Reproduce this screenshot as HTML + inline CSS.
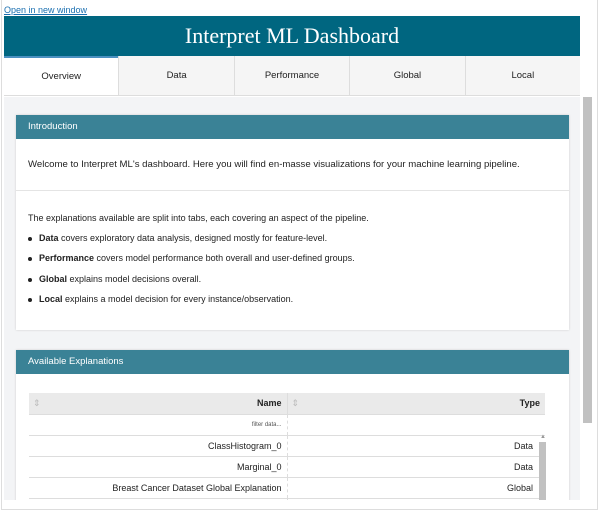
<!DOCTYPE html>
<html><head><style>
*{margin:0;padding:0;box-sizing:border-box}
body{width:600px;height:517px;background:#fff;font-family:"Liberation Sans",sans-serif;position:relative;overflow:hidden;color:#222}
.frame{position:absolute;left:1px;top:0;width:597px;height:510px;border:1px solid #ddd;border-top:none}
a.open{position:absolute;left:4px;top:5px;font-size:9px;color:#1a6fb0;text-decoration:underline}
.hdr{position:absolute;left:4px;top:16px;width:576px;height:40px;background:#006680;color:#fff;font-family:"Liberation Serif",serif;font-size:22px;text-align:center;line-height:40px}
.tabs{position:absolute;left:4px;top:56px;width:576px;height:40px;background:#f5f5f5;border-bottom:1px solid #ddd;display:flex}
.tabs div{flex:1;text-align:center;line-height:40px;font-size:9.5px;border-left:1px solid #ddd}
.tabs div:first-child{background:#fff;border-left:none;border-top:2px solid #4a90c0;line-height:37px}
.content{position:absolute;left:4px;top:97px;width:576px;height:403px;background:#f3f4f6;overflow:hidden}
.sb{position:absolute;left:583px;top:97px;width:9px;height:326px;background:#c1c1c1}
.card{position:absolute;left:12px;width:553px;background:#fff;box-shadow:0 0 2px #ccc}
.ch{background:#3a8296;color:#fff;font-size:9.5px;height:24px;line-height:24px;padding-left:12px}
.t{font-size:9px;position:absolute;left:12px}
.li{font-size:9px;position:absolute;left:12px}
.li:before{content:"";display:inline-block;width:4px;height:4px;border-radius:50%;background:#222;margin-right:7px;vertical-align:middle}
table{position:absolute;left:13px;top:43px;width:516px;border-collapse:collapse;font-size:9px}
td{height:21px;text-align:right;padding-right:5px;border-bottom:1px solid #ddd}
td.ty{padding-right:12px}
</style></head><body>
<div class="frame"></div>
<a class="open">Open in new window</a>
<div class="hdr">Interpret ML Dashboard</div>
<div class="tabs"><div>Overview</div><div>Data</div><div>Performance</div><div>Global</div><div>Local</div></div>
<div class="content">
<div class="card" style="top:18px;height:215px">
<div class="ch">Introduction</div>
<div class="t" style="top:44px;font-size:9.6px">Welcome to Interpret ML's dashboard. Here you will find en-masse visualizations for your machine learning pipeline.</div>
<div style="position:absolute;left:0;right:0;top:75px;border-top:1px solid #e4e4e4"></div>
<div class="t" style="top:98px">The explanations available are split into tabs, each covering an aspect of the pipeline.</div>
<div class="li" style="top:118px"><b>Data</b> covers exploratory data analysis, designed mostly for feature-level.</div>
<div class="li" style="top:138px"><b>Performance</b> covers model performance both overall and user-defined groups.</div>
<div class="li" style="top:159px"><b>Global</b> explains model decisions overall.</div>
<div class="li" style="top:179px"><b>Local</b> explains a model decision for every instance/observation.</div>
</div>
<div class="card" style="top:253px;height:170px">
<div class="ch">Available Explanations</div>
<table>
<tr style="background:#eaeaea"><td style="width:258px;border-right:1px solid #ddd"><span style="float:left;color:#bbb;padding-left:4px">⇕</span><b>Name</b></td><td><span style="float:left;color:#bbb;padding-left:4px">⇕</span><b>Type</b></td></tr>
<tr><td style="font-size:6px;color:#555;height:18px;border-right:1px dashed #ddd">filter data...</td><td></td></tr>
<tr><td style="border-right:1px dashed #ddd">ClassHistogram_0</td><td class="ty">Data</td></tr>
<tr><td style="border-right:1px dashed #ddd">Marginal_0</td><td class="ty">Data</td></tr>
<tr><td style="border-right:1px dashed #ddd">Breast Cancer Dataset Global Explanation</td><td class="ty">Global</td></tr>
<tr><td style="border-right:1px dashed #ddd">&nbsp;</td><td></td></tr>
</table>
<div style="position:absolute;left:523px;top:92px;width:7px;height:80px;background:#c1c1c1"></div>
<div style="position:absolute;left:524px;top:84px;font-size:6px;color:#999">▲</div>
</div>
</div>
<div class="sb"></div>
</body></html>
